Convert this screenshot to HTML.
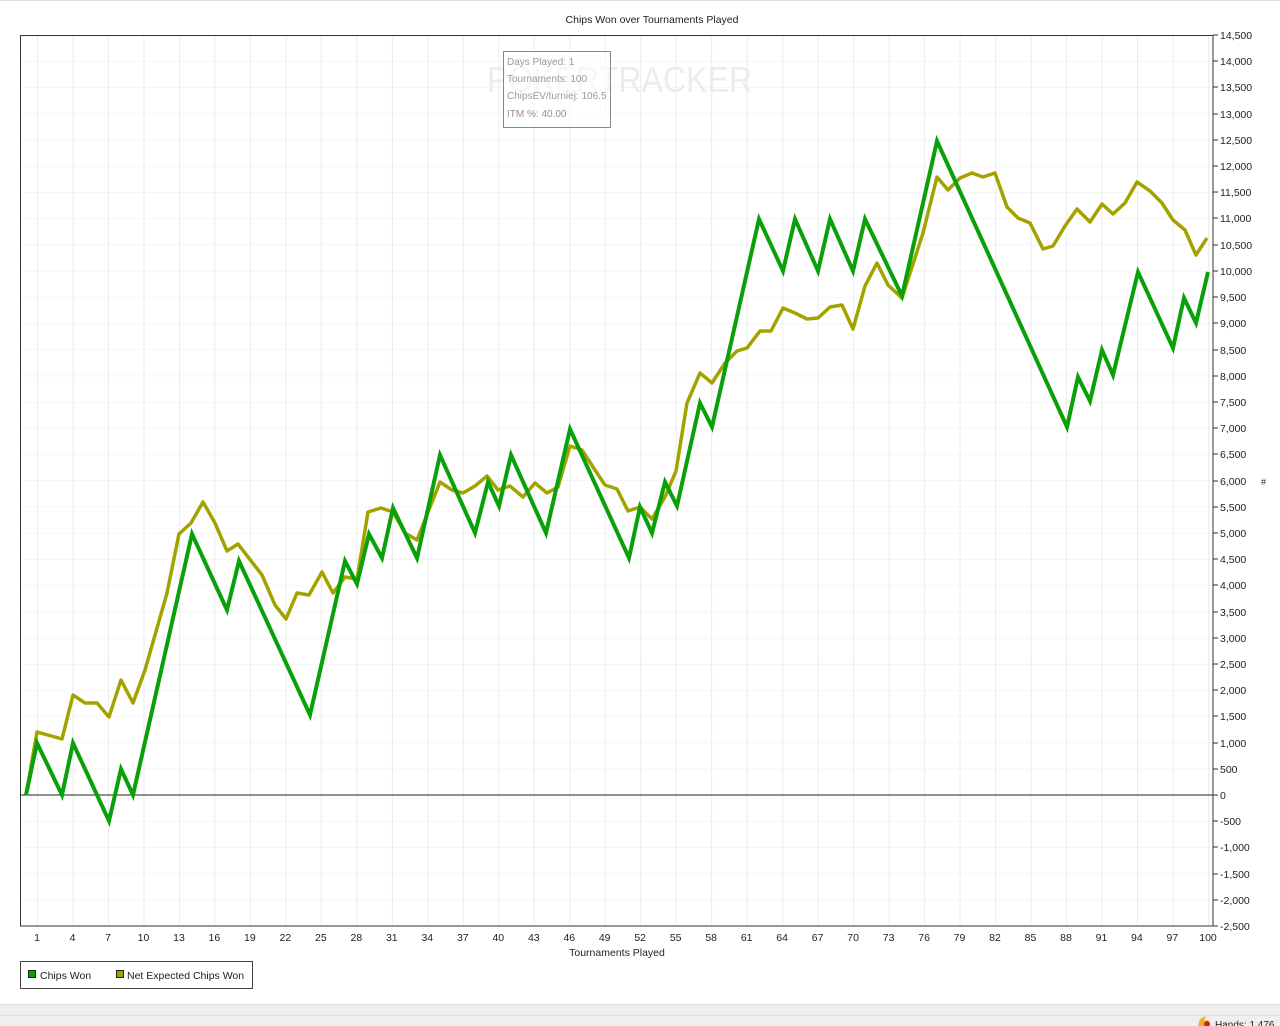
<!DOCTYPE html>
<html><head><meta charset="utf-8"><style>
html,body{margin:0;padding:0;background:#fff;width:1280px;height:1026px;overflow:hidden}
svg{display:block;font-family:"Liberation Sans",sans-serif}
</style></head><body>
<svg width="1280" height="1026" viewBox="0 0 1280 1026" xmlns="http://www.w3.org/2000/svg">
<defs>
<pattern id="gh" x="0" y="35" width="2000" height="26.206" patternUnits="userSpaceOnUse"><line x1="0" y1="0" x2="2000" y2="0" stroke="#ececec" stroke-width="1"/></pattern>
<pattern id="gv" x="37" y="0" width="35.484" height="2000" patternUnits="userSpaceOnUse"><line x1="0.5" y1="0" x2="0.5" y2="2000" stroke="#ececec" stroke-width="1"/></pattern>
</defs>
<line x1="0" y1="0.5" x2="1280" y2="0.5" stroke="#ddd"/>
<text x="652" y="23" font-size="10.5" text-anchor="middle" fill="#222">Chips Won over Tournaments Played</text>
<rect x="20" y="35" width="1193" height="891" fill="url(#gh)"/>
<rect x="20" y="35" width="1193" height="891" fill="url(#gv)"/>
<text x="487" y="92" font-size="36" fill="#ececec" textLength="265" lengthAdjust="spacingAndGlyphs">POKERTRACKER</text>
<rect x="20.5" y="35.5" width="1192.5" height="890.5" fill="none" stroke="#333" stroke-width="1"/>
<line x1="20" y1="795" x2="1213" y2="795" stroke="#222" stroke-width="1"/>
<g stroke="#333">
<line x1="1213" y1="35" x2="1218" y2="35"/><line x1="1213" y1="61" x2="1218" y2="61"/><line x1="1213" y1="87" x2="1218" y2="87"/><line x1="1213" y1="114" x2="1218" y2="114"/><line x1="1213" y1="140" x2="1218" y2="140"/><line x1="1213" y1="166" x2="1218" y2="166"/><line x1="1213" y1="192" x2="1218" y2="192"/><line x1="1213" y1="218" x2="1218" y2="218"/><line x1="1213" y1="245" x2="1218" y2="245"/><line x1="1213" y1="271" x2="1218" y2="271"/><line x1="1213" y1="297" x2="1218" y2="297"/><line x1="1213" y1="323" x2="1218" y2="323"/><line x1="1213" y1="350" x2="1218" y2="350"/><line x1="1213" y1="376" x2="1218" y2="376"/><line x1="1213" y1="402" x2="1218" y2="402"/><line x1="1213" y1="428" x2="1218" y2="428"/><line x1="1213" y1="454" x2="1218" y2="454"/><line x1="1213" y1="481" x2="1218" y2="481"/><line x1="1213" y1="507" x2="1218" y2="507"/><line x1="1213" y1="533" x2="1218" y2="533"/><line x1="1213" y1="559" x2="1218" y2="559"/><line x1="1213" y1="585" x2="1218" y2="585"/><line x1="1213" y1="612" x2="1218" y2="612"/><line x1="1213" y1="638" x2="1218" y2="638"/><line x1="1213" y1="664" x2="1218" y2="664"/><line x1="1213" y1="690" x2="1218" y2="690"/><line x1="1213" y1="716" x2="1218" y2="716"/><line x1="1213" y1="743" x2="1218" y2="743"/><line x1="1213" y1="769" x2="1218" y2="769"/><line x1="1213" y1="795" x2="1218" y2="795"/><line x1="1213" y1="821" x2="1218" y2="821"/><line x1="1213" y1="847" x2="1218" y2="847"/><line x1="1213" y1="874" x2="1218" y2="874"/><line x1="1213" y1="900" x2="1218" y2="900"/><line x1="1213" y1="926" x2="1218" y2="926"/>
</g>
<g font-size="10.5" fill="#222">
<text x="1220" y="39">14,500</text><text x="1220" y="65">14,000</text><text x="1220" y="91">13,500</text><text x="1220" y="118">13,000</text><text x="1220" y="144">12,500</text><text x="1220" y="170">12,000</text><text x="1220" y="196">11,500</text><text x="1220" y="222">11,000</text><text x="1220" y="249">10,500</text><text x="1220" y="275">10,000</text><text x="1220" y="301">9,500</text><text x="1220" y="327">9,000</text><text x="1220" y="354">8,500</text><text x="1220" y="380">8,000</text><text x="1220" y="406">7,500</text><text x="1220" y="432">7,000</text><text x="1220" y="458">6,500</text><text x="1220" y="485">6,000</text><text x="1220" y="511">5,500</text><text x="1220" y="537">5,000</text><text x="1220" y="563">4,500</text><text x="1220" y="589">4,000</text><text x="1220" y="616">3,500</text><text x="1220" y="642">3,000</text><text x="1220" y="668">2,500</text><text x="1220" y="694">2,000</text><text x="1220" y="720">1,500</text><text x="1220" y="747">1,000</text><text x="1220" y="773">500</text><text x="1220" y="799">0</text><text x="1220" y="825">-500</text><text x="1220" y="851">-1,000</text><text x="1220" y="878">-1,500</text><text x="1220" y="904">-2,000</text><text x="1220" y="930">-2,500</text>
<text x="1261" y="485" font-size="9">#</text>
</g>
<g font-size="10.5" fill="#222" text-anchor="middle">
<text x="37" y="941">1</text><text x="72.5" y="941">4</text><text x="108" y="941">7</text><text x="143.5" y="941">10</text><text x="179" y="941">13</text><text x="214.4" y="941">16</text><text x="249.9" y="941">19</text><text x="285.4" y="941">22</text><text x="320.9" y="941">25</text><text x="356.4" y="941">28</text><text x="391.8" y="941">31</text><text x="427.3" y="941">34</text><text x="462.8" y="941">37</text><text x="498.3" y="941">40</text><text x="533.8" y="941">43</text><text x="569.3" y="941">46</text><text x="604.7" y="941">49</text><text x="640.2" y="941">52</text><text x="675.7" y="941">55</text><text x="711.2" y="941">58</text><text x="746.7" y="941">61</text><text x="782.1" y="941">64</text><text x="817.6" y="941">67</text><text x="853.1" y="941">70</text><text x="888.6" y="941">73</text><text x="924.1" y="941">76</text><text x="959.5" y="941">79</text><text x="995" y="941">82</text><text x="1030.5" y="941">85</text><text x="1066" y="941">88</text><text x="1101.5" y="941">91</text><text x="1136.9" y="941">94</text><text x="1172.4" y="941">97</text><text x="1208" y="941">100</text>
<text x="617" y="956">Tournaments Played</text>
</g>
<polyline fill="none" stroke="#a3a300" stroke-width="3.5" stroke-linejoin="round" points="26,795 37,732 62,739 73,695 85,703 97,703 109,717 121,680 133,703 145,670 167,593 179,534 191,523 203,502 215,523 227,551 238,544 262,575 275,605 286,619 297,593 309,595 322,572 333,593 345,577 357,579 368,512 381,508 393,512 405,533 417,540 440,482 452,490 463,493 475,486 487,476 498,490 510,486 523,497 535,483 547,493 558,487 570,446 582,450 593,467 605,485 617,489 628,511 640,507 652,519 665,497 676,471 687,403 700,373 712,383 725,363 737,351 747,348 760,331 771,331 783,308 795,313 807,319 818,318 830,307 842,305 853,329 865,286 877,263 888,285 902,298 923,233 937,177 948,190 960,178 972,173 983,177 995,173 1007,207 1018,218 1030,223 1043,249 1053,246 1065,226 1077,209 1090,222 1102,204 1113,214 1125,203 1137,182 1150,191 1162,203 1173,220 1185,230 1196,255 1207,238"/>
<polyline fill="none" stroke="#0aa00a" stroke-width="4" stroke-linejoin="miter" points="26,795 37,743 62,795 73,743 109,821 121,769 133,795 192,534 227,610 239,561 310,715 345,561 357,584 369,534 382,558 393,508 417,558 440,455 475,533 488,482 499,506 511,455 546,533 570,429 629,558 640,507 652,533 665,482 677,506 700,403 712,427 759,219 783,271 795,219 818,271 830,219 853,271 865,219 902,296 937,141 1067,427 1078,377 1090,401 1102,350 1113,375 1138,272 1173,348 1184,298 1196,323 1208,272"/>
<rect x="503.5" y="51.5" width="107" height="76" fill="#fff" fill-opacity="0.6" stroke="#888"/>
<g font-size="10" fill="#999">
<text x="507" y="65">Days Played: 1</text>
<text x="507" y="82">Tournaments: 100</text>
<text x="507" y="99">ChipsEV/turniej: 106.5</text>
<text x="507" y="117" fill="#a08890">ITM %: 40.00</text>
</g>
<rect x="20.5" y="961.5" width="232" height="27" fill="#fff" stroke="#444"/>
<rect x="28.5" y="970.5" width="7" height="7" fill="#0aa00a" stroke="#222"/>
<text x="40" y="979" font-size="10.5" fill="#222">Chips Won</text>
<rect x="116.5" y="970.5" width="7" height="7" fill="#a3a300" stroke="#222"/>
<text x="127" y="979" font-size="10.5" fill="#222">Net Expected Chips Won</text>
<rect x="0" y="1004" width="1280" height="22" fill="#efefef"/>
<line x1="0" y1="1004.5" x2="1280" y2="1004.5" stroke="#ddd"/>
<line x1="0" y1="1015.5" x2="1280" y2="1015.5" stroke="#ddd"/>
<path d="M1200 1019 L1206 1016 L1204 1021 L1209 1020 L1204 1026 L1198 1026 Z" fill="#f0b020"/>
<circle cx="1207" cy="1024" r="3" fill="#d02020"/>
<text x="1215" y="1028" font-size="10" fill="#222">Hands: 1,476</text>
</svg>
</body></html>
